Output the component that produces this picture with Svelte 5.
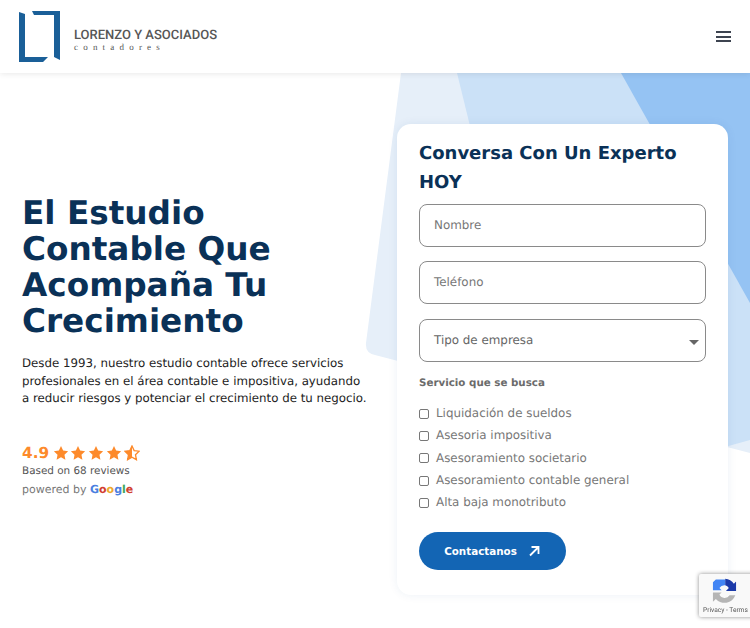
<script lang="ts">
  const services = [
    'Liquidación de sueldos',
    'Asesoria impositiva',
    'Asesoramiento societario',
    'Asesoramiento contable general',
    'Alta baja monotributo'
  ];
  const star = 'M12 1.5l3.2 6.9 7.5.9-5.5 5.2 1.4 7.5L12 18.3l-6.6 3.7 1.4-7.5L1.3 9.3l7.5-.9z';
</script>

<header class="topbar">
  <div class="brand">
    <svg class="mark" width="42" height="52" viewBox="0 0 42 52">
      <path d="M0 1l6 2V46H29L24 51H0z M13 0H41V49L35 46V4H15z" fill="#1a5f98" />
    </svg>
    <div class="brand-text">
      <div class="brand-name">LORENZO Y ASOCIADOS</div>
      <div class="brand-sub">contadores</div>
    </div>
  </div>
  <button class="burger" aria-label="menu"><span></span><span></span><span></span></button>
</header>

<main class="hero">
  <svg class="shapes" width="750" height="555" viewBox="0 0 750 555">
    <path d="M401 0H750V380L375 282Q365 280 366 270z" fill="#e6eff9" />
    <path d="M457 0H750V367L560 420z" fill="#cbe1f7" />
    <path d="M621 0H750V230z" fill="#95c3f3" />
  </svg>

  <section class="intro">
    <h1>El Estudio Contable Que Acompaña Tu Crecimiento</h1>
    <p>Desde 1993, nuestro estudio contable ofrece servicios profesionales en el área contable e impositiva, ayudando a reducir riesgos y potenciar el crecimiento de tu negocio.</p>
    <div class="rating">
      <span class="score">4.9</span>
      {#each [0, 1, 2, 3] as i (i)}
        <svg width="16" height="16" viewBox="0 0 24 24"><path d={star} fill="#fd8a2b" /></svg>
      {/each}
      <svg width="16" height="16" viewBox="0 0 24 24">
        <path d="M12 1.5V18.3L5.4 22l1.4-7.5L1.3 9.3l7.5-.9z" fill="#fd8a2b" />
        <path d={star} fill="none" stroke="#fd8a2b" stroke-width="2" />
      </svg>
    </div>
    <div class="based">Based on 68 reviews</div>
    <div class="powered">powered by <b class="google"><i class="b">G</i><i class="r">o</i><i class="y">o</i><i class="b">g</i><i class="g">l</i><i class="r">e</i></b></div>
  </section>

  <form class="card">
    <h2>Conversa Con Un Experto HOY</h2>
    <div class="field">Nombre</div>
    <div class="field">Teléfono</div>
    <div class="field select">Tipo de empresa<span class="caret"></span></div>
    <div class="label">Servicio que se busca</div>
    <ul class="checks">
      {#each services as s (s)}
        <li><span class="box"></span>{s}</li>
      {/each}
    </ul>
    <button class="send" type="button">
      Contactanos
      <svg width="14" height="14" viewBox="0 0 14 14"><path d="M3 11.5L11 3.5M4.5 3H11.5V10" fill="none" stroke="#fff" stroke-width="1.8" /></svg>
    </button>
  </form>
</main>

<div class="recaptcha">
  <svg width="29" height="26" viewBox="0 0 40 36">
    <path d="M8 2h13v8a8 8 0 0 0-8 4l3 3H4V6z" fill="#4285f4" />
    <path d="M21 1a16 16 0 0 1 12 7l3-3v13H22l4-4a8 8 0 0 0-5-4z" fill="#1c3aa9" />
    <path d="M4 20h12l-3 3a8 8 0 0 0 14 1h8a16 16 0 0 1-27 5l-4 4z" fill="#b5b5b5" />
  </svg>
  <div class="rc-links">Privacy - Terms</div>
</div>

<style>
  :global(body) {
    margin: 0;
    background: #fff;
    font-family: 'DejaVu Sans', sans-serif;
    text-rendering: geometricPrecision;
    overflow: hidden;
  }

  .topbar {
    position: relative;
    z-index: 2;
    height: 73px;
    box-sizing: border-box;
    padding: 10px 19px 0 19px;
    display: flex;
    justify-content: space-between;
    background: #fff;
    box-shadow: 0 1px 6px rgba(0, 0, 0, 0.09);
  }

  .brand {
    display: flex;
    align-items: flex-start;
    gap: 13px;
  }

  .mark {
    display: block;
    margin-top: 1px;
  }

  .brand-text {
    margin-top: 18px;
    font-family: 'Roboto', sans-serif;
    color: #565656;
  }

  .brand-name {
    font-size: 13px;
    line-height: 15px;
    font-weight: 500;
    white-space: nowrap;
  }

  .brand-sub {
    font-family: 'Liberation Serif', serif;
    font-size: 9px;
    line-height: 9px;
    letter-spacing: 5.2px;
  }

  .burger {
    margin-top: 21px;
    width: 15px;
    height: 11px;
    padding: 0;
    border: 0;
    background: none;
    display: flex;
    flex-direction: column;
    justify-content: space-between;
  }

  .burger span {
    display: block;
    height: 2px;
    background: #3d4450;
  }

  .hero {
    position: relative;
    height: 555px;
    display: flex;
    align-items: flex-start;
    padding-left: 22px;
  }

  .shapes {
    position: absolute;
    left: 0;
    top: 0;
  }

  .intro {
    position: relative;
    width: 345px;
    margin-top: 122px;
    flex-shrink: 0;
  }

  h1 {
    margin: 0 0 16px;
    font-size: 32.7px;
    line-height: 36px;
    font-weight: 700;
    color: #0a3157;
  }

  .intro p {
    margin: 0 0 35px;
    width: 347px;
    font-size: 11.8px;
    line-height: 17.5px;
    color: #222;
  }

  .rating {
    display: flex;
    align-items: center;
    gap: 1.7px;
    height: 20px;
  }

  .score {
    font-size: 15.3px;
    font-weight: 700;
    color: #fd8a2b;
    margin-right: 2px;
  }

  .based {
    margin-top: 0;
    font-size: 10.4px;
    line-height: 16px;
    color: #555;
  }

  .powered {
    margin-top: 3px;
    font-size: 11px;
    line-height: 16px;
    color: #777;
  }

  .google i {
    font-style: normal;
  }

  .b { color: #4a7fe0; }
  .r { color: #d23f31; }
  .y { color: #eda92e; }
  .g { color: #3fa757; }

  .card {
    position: relative;
    box-sizing: border-box;
    width: 331px;
    height: 471px;
    margin: 51px 0 0 30px;
    padding: 14.5px 22px 0;
    background: #fff;
    border-radius: 14px;
    box-shadow: 0 0 10px rgba(20, 80, 140, 0.08);
  }

  h2 {
    margin: 0 0 7.5px;
    font-size: 18px;
    line-height: 29px;
    font-weight: 700;
    color: #0a3157;
  }

  .field {
    position: relative;
    box-sizing: border-box;
    height: 43px;
    margin-bottom: 14px;
    padding: 0 14px 1px;
    display: flex;
    align-items: center;
    border: 1px solid #8a8a8a;
    border-radius: 8px;
    font-size: 11.9px;
    color: #777;
  }

  .field + .field {
    margin-bottom: 15px;
  }

  .select {
    color: #666;
  }

  .field.select {
    margin-bottom: 14px;
  }

  .caret {
    position: absolute;
    right: 6px;
    top: 20px;
    border: 5px solid transparent;
    border-top: 5px solid #666;
    border-bottom: 0;
  }

  .label {
    font-size: 10.3px;
    line-height: 15px;
    font-weight: 700;
    color: #6b6b6b;
    margin-bottom: 11px;
  }

  .checks {
    list-style: none;
    margin: 0 0 18.5px;
    padding: 0;
  }

  .checks li {
    display: flex;
    align-items: center;
    height: 22.3px;
    font-size: 11.9px;
    color: #777;
  }

  .box {
    box-sizing: border-box;
    width: 10px;
    height: 10px;
    margin: 1px 7px 0 0;
    border: 1px solid #777;
    border-radius: 2px;
    background: #fff;
  }

  .send {
    width: 147px;
    height: 38px;
    padding: 0;
    border: 0;
    border-radius: 19px;
    background: #1365b4;
    color: #fff;
    font-family: inherit;
    font-size: 10.35px;
    font-weight: 700;
    display: flex;
    align-items: center;
    justify-content: center;
    gap: 10px;
  }

  .recaptcha {
    position: fixed;
    left: 699px;
    top: 574px;
    width: 60px;
    height: 43px;
    background: #f9f9f9;
    border-radius: 2px;
    box-shadow: 0 0 4px rgba(0, 0, 0, 0.45);
    overflow: hidden;
  }

  .recaptcha svg {
    display: block;
    position: absolute;
    left: 11px;
    top: 4px;
  }

  .rc-links {
    position: absolute;
    left: 4px;
    top: 32px;
    font-family: 'Roboto', sans-serif;
    font-size: 6.6px;
    color: #555;
    white-space: nowrap;
  }
</style>
